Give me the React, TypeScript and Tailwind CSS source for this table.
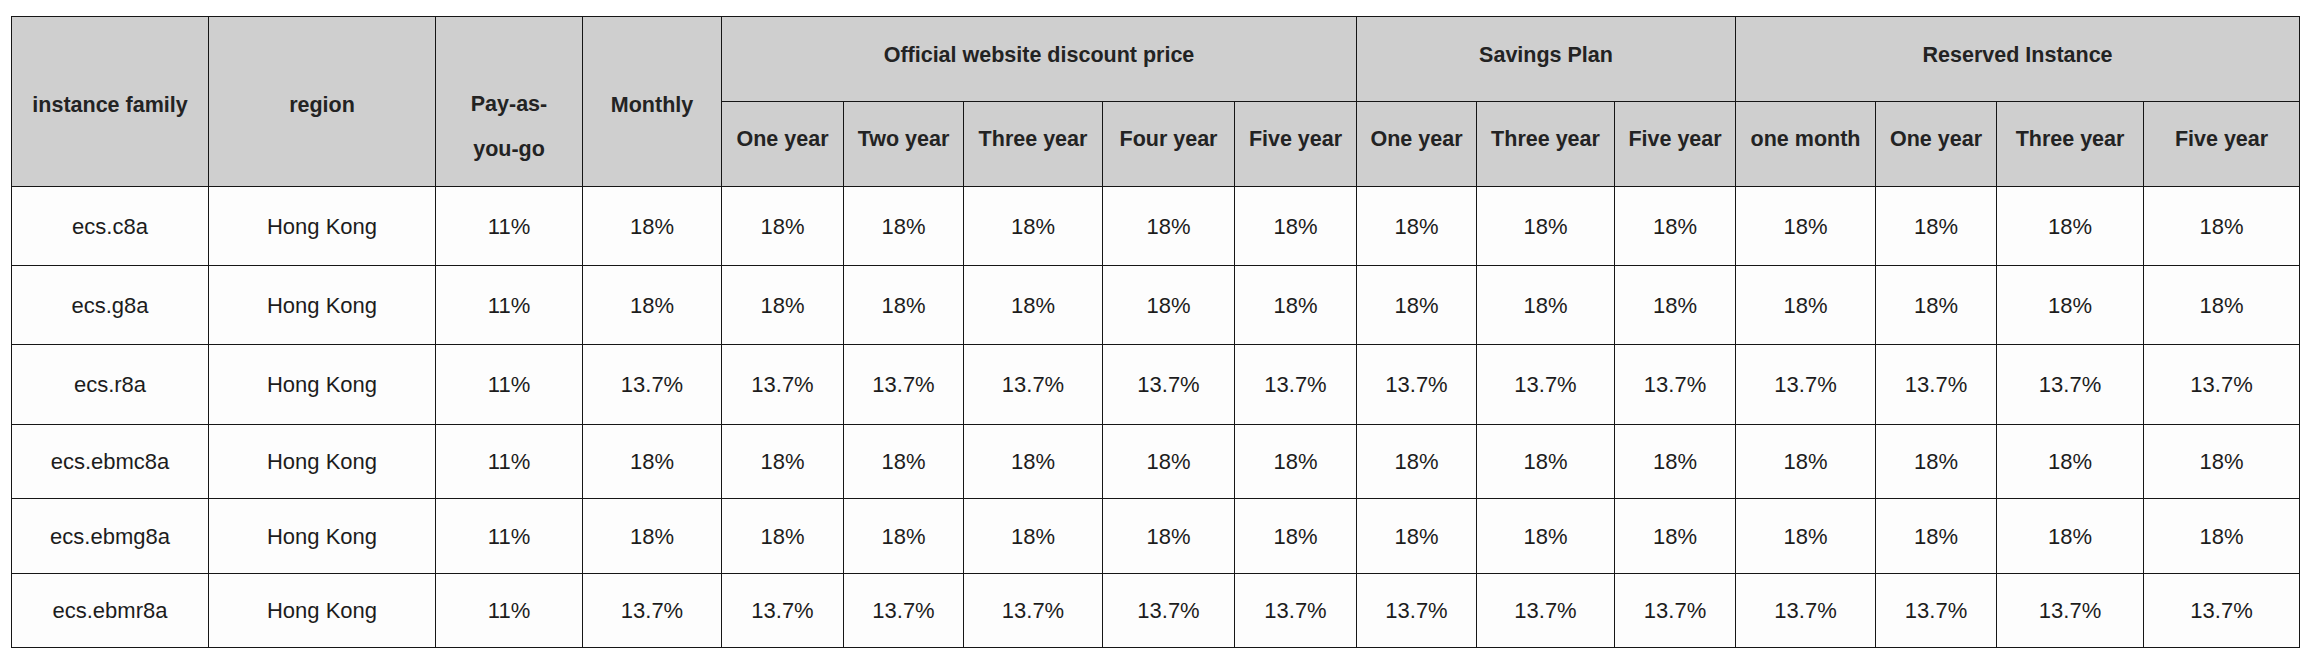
import React from 'react'

const colWidths = [197, 227, 147, 139, 122, 120, 139, 132, 122, 120, 138, 121, 140, 121, 147, 156]

const subHeaders = [
  'One year',
  'Two year',
  'Three year',
  'Four year',
  'Five year',
  'One year',
  'Three year',
  'Five year',
  'one month',
  'One year',
  'Three year',
  'Five year',
]

const rows = [
  { family: 'ecs.c8a', rate: '18%', height: 'h-[79px]' },
  { family: 'ecs.g8a', rate: '18%', height: 'h-[79px]' },
  { family: 'ecs.r8a', rate: '13.7%', height: 'h-[80px]' },
  { family: 'ecs.ebmc8a', rate: '18%', height: 'h-[74px]' },
  { family: 'ecs.ebmg8a', rate: '18%', height: 'h-[75px]' },
  { family: 'ecs.ebmr8a', rate: '13.7%', height: 'h-[74px]' },
]

const th = 'border border-[#161616] bg-[#cfcfcf] text-center align-middle font-bold text-[21.5px] text-[#232323]'
const td = 'border border-[#161616] bg-[#fdfdfd] text-center align-middle text-[22px] text-[#1c1c1c]'

export default function App() {
  return (
    <div className="min-h-[660px] bg-white pt-[16px] pl-[11px] font-['Liberation_Sans',Arial,sans-serif] leading-[45px]">
      <table className="table-fixed border-collapse" style={{ width: 2288 }}>
        <colgroup>
          {colWidths.map((w, i) => (
            <col key={i} style={{ width: w }} />
          ))}
        </colgroup>
        <thead>
          <tr className="h-[85px]">
            <th rowSpan={2} className={`${th} pt-[8px]`}>instance family</th>
            <th rowSpan={2} className={`${th} pt-[8px]`}>region</th>
            <th rowSpan={2} className={`${th} pt-[50px]`}>
              Pay-as-
              <br />
              you-go
            </th>
            <th rowSpan={2} className={`${th} pt-[8px]`}>Monthly</th>
            <th colSpan={5} className={`${th} pb-[8px]`}>Official website discount price</th>
            <th colSpan={3} className={`${th} pb-[8px]`}>Savings Plan</th>
            <th colSpan={4} className={`${th} pb-[8px]`}>Reserved Instance</th>
          </tr>
          <tr className="h-[85px]">
            {subHeaders.map((h, i) => (
              <th key={i} className={`${th} whitespace-nowrap pb-[10px]`}>
                {h}
              </th>
            ))}
          </tr>
        </thead>
        <tbody>
          {rows.map((r) => (
            <tr key={r.family} className={r.height}>
              <td className={td}>{r.family}</td>
              <td className={td}>Hong Kong</td>
              <td className={td}>11%</td>
              {Array.from({ length: 13 }).map((_, i) => (
                <td key={i} className={td}>
                  {r.rate}
                </td>
              ))}
            </tr>
          ))}
        </tbody>
      </table>
    </div>
  )
}
